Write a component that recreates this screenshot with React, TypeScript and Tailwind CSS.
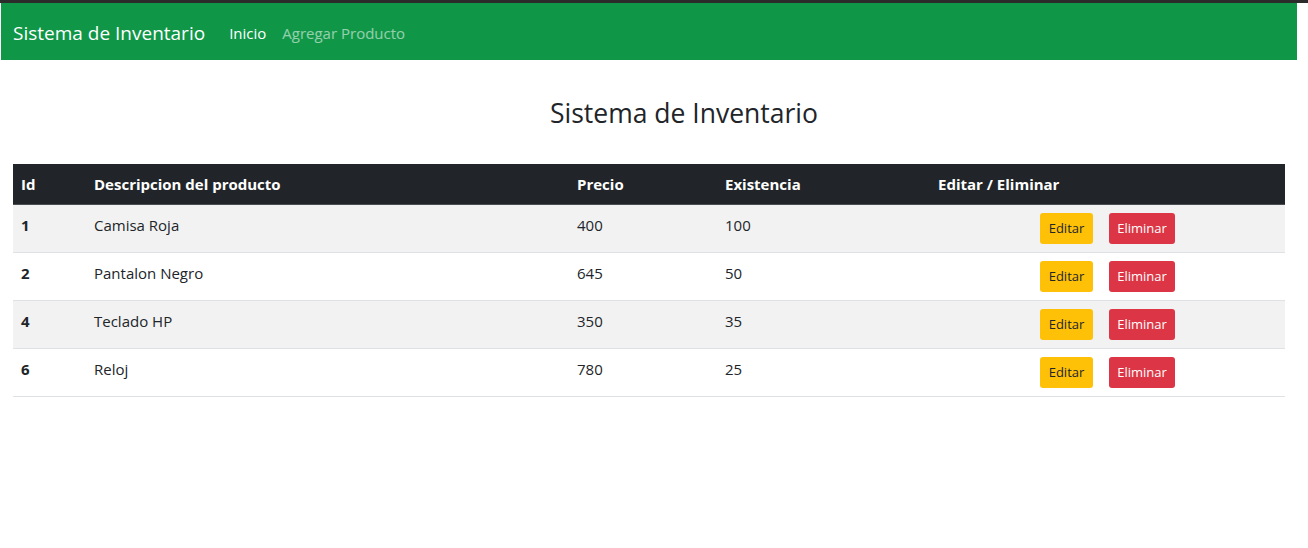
const productos = [
  { id: 1, descripcion: 'Camisa Roja', precio: 400, existencia: 100 },
  { id: 2, descripcion: 'Pantalon Negro', precio: 645, existencia: 50 },
  { id: 4, descripcion: 'Teclado HP', precio: 350, existencia: 35 },
  { id: 6, descripcion: 'Reloj', precio: 780, existencia: 25 },
];

export default function App() {
  return (
    <div className="min-h-[548px] bg-white text-[#212529] font-['Open_Sans',sans-serif] text-base">
      <div className="h-[3px] bg-[#2b2b2b]" />
      <nav className="ml-[1px] flex h-[57px] w-[1296px] items-center bg-[#0f9647] pl-[12px] pt-[3px]">
        <span className="text-[19px] text-white">Sistema de Inventario</span>
        <div className="ml-[24px] flex gap-[16px] text-[15px]">
          <a className="text-white">Inicio</a>
          <a className="text-white/55">Agregar Producto</a>
        </div>
      </nav>

      <div className="ml-[13px] w-[1272px]">
        <h3 className="mt-[36px] mb-[34px] pl-[70px] text-center text-[26.5px] leading-[34px]">
          Sistema de Inventario
        </h3>

        <table className="w-full table-fixed border-collapse text-[15px]">
          <colgroup>
            <col className="w-[73px]" />
            <col className="w-[483px]" />
            <col className="w-[148px]" />
            <col className="w-[213px]" />
            <col className="w-[355px]" />
          </colgroup>
          <thead>
            <tr className="h-[40px] bg-[#212529] text-left font-bold text-white border-b border-[#4a4e52]">
              <th className="px-2 align-middle">Id</th>
              <th className="px-2 align-middle">Descripcion del producto</th>
              <th className="px-2 align-middle">Precio</th>
              <th className="px-2 align-middle">Existencia</th>
              <th className="px-2 align-middle">Editar / Eliminar</th>
            </tr>
          </thead>
          <tbody>
            {productos.map((p, i) => (
              <tr
                key={p.id}
                className={(i % 2 === 0 ? 'bg-[#f2f2f2] ' : 'bg-white ') + 'h-[48px] border-b border-[#dee2e6]'}
              >
                <td className="px-2 pt-[8px] align-top font-bold leading-[24px]">{p.id}</td>
                <td className="px-2 pt-[8px] align-top leading-[24px]">{p.descripcion}</td>
                <td className="px-2 pt-[8px] align-top leading-[24px]">{p.precio}</td>
                <td className="px-2 pt-[8px] align-top leading-[24px]">{p.existencia}</td>
                <td className="px-2 pt-[8px] align-top">
                  <div className="flex justify-center gap-[16px]">
                    <button className="h-[31px] w-[53px] rounded-[3px] bg-[#ffc107] pt-[2px] text-[13px] text-[#212529]">
                      Editar
                    </button>
                    <button className="h-[31px] w-[66px] rounded-[3px] bg-[#dc3545] pt-[2px] text-[13px] text-white">
                      Eliminar
                    </button>
                  </div>
                </td>
              </tr>
            ))}
          </tbody>
        </table>
      </div>
    </div>
  );
}
